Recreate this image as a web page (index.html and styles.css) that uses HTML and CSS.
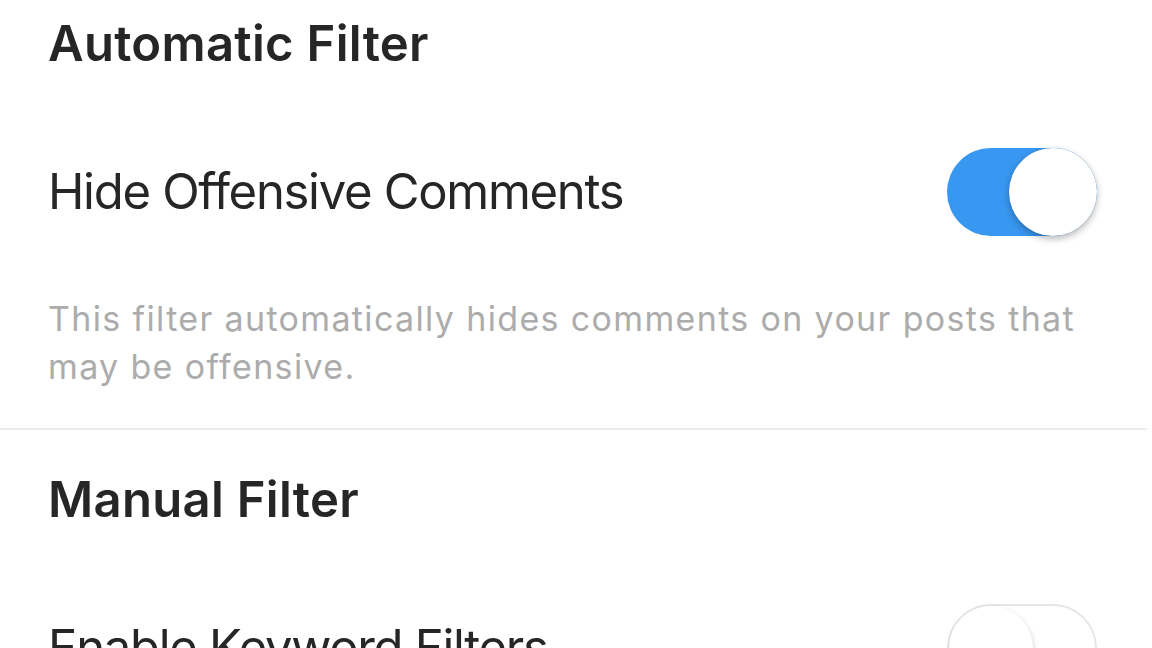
FILE: index.html
```html
<!DOCTYPE html>
<html lang="en">
<head>
<meta charset="utf-8">
<title>Comment Controls</title>
<link rel="stylesheet" href="styles.css">
</head>
<body>
<main class="page">
  <section class="group group-first">
    <h2 class="group-title">Automatic Filter</h2>
    <div class="row">
      <span class="row-label">Hide Offensive Comments</span>
      <span class="switch switch-on"><span class="knob"></span></span>
    </div>
    <p class="note">This filter automatically hides comments on your posts that may be offensive.</p>
  </section>
  <hr class="divider">
  <section class="group">
    <h2 class="group-title">Manual Filter</h2>
    <div class="row">
      <span class="row-label">Enable Keyword Filters</span>
      <span class="switch switch-off"><span class="knob"></span></span>
    </div>
  </section>
</main>
</body>
</html>
```

FILE: styles.css
```css
html, body {
  margin: 0;
  padding: 0;
  background: #ffffff;
}

body {
  font-family: Inter, "Noto Sans", "Liberation Sans", sans-serif;
  color: #262626;
  overflow: hidden;
  height: 648px;
}

.page {
  width: 1147px;
}

.group {
  padding: 0 50px 0 48px;
}

.group-first {
  padding-top: 14px;
}

.group-title {
  margin: 0;
  font-size: 49px;
  line-height: 60px;
  font-weight: 600;
  color: #262626;
  letter-spacing: 0.3px;
}

.row {
  display: flex;
  align-items: center;
  justify-content: space-between;
  height: 88px;
  margin-top: 74px;
}

.row-label {
  font-size: 49px;
  line-height: 60px;
  font-weight: 400;
  color: #262626;
  letter-spacing: -1.3px;
}

.switch {
  display: flex;
  align-items: center;
  box-sizing: border-box;
  width: 150px;
  height: 88px;
  border-radius: 44px;
}

.switch-on {
  background: #3897f0;
  justify-content: flex-end;
}

.switch-off {
  background: #ffffff;
  border: 2px solid #e6e6e6;
  justify-content: flex-start;
}

.knob {
  width: 88px;
  height: 88px;
  border-radius: 50%;
  background: #ffffff;
  box-shadow: 0 3px 7px rgba(0, 0, 0, 0.28), 0 0 1px rgba(0, 0, 0, 0.2);
}

.switch-off .knob {
  width: 84px;
  height: 84px;
  box-shadow: 1px 2px 5px rgba(0, 0, 0, 0.15);
}

.note {
  margin: 59px 0 0 0;
  font-size: 34px;
  line-height: 48px;
  color: #acacac;
  letter-spacing: 1.35px;
}

.divider {
  margin: 37px 0 0 0;
  border: 0;
  height: 2px;
  background: #ececec;
}

.divider + .group .group-title {
  margin-top: 40px;
}
```
